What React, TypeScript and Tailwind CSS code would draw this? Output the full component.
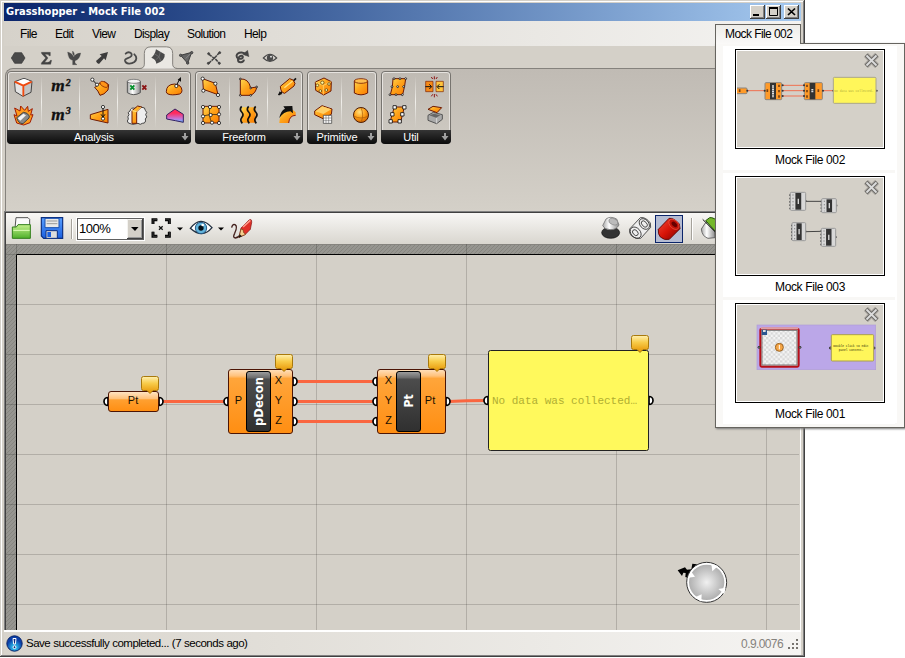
import React from "react";

type Kids = { children?: React.ReactNode };

const OR = { fill: "url(#orange)", stroke: "#6e1a04", strokeWidth: 3, strokeLinejoin: "round" as const };

function Defs() {
  return (
    <svg className="absolute h-0 w-0">
      <defs>
        <linearGradient id="orange" x1="0" y1="0" x2="1" y2="1">
          <stop offset="0" stopColor="#ffd850" />
          <stop offset=".45" stopColor="#ffa51c" />
          <stop offset="1" stopColor="#fa7c00" />
        </linearGradient>
        <linearGradient id="node" x1="0" y1="0" x2="0" y2="1">
          <stop offset="0" stopColor="#ffe0bd" />
          <stop offset=".1" stopColor="#ffc27c" />
          <stop offset=".14" stopColor="#ffa53a" />
          <stop offset="1" stopColor="#ff8e12" />
        </linearGradient>
        <linearGradient id="nodeSmall" x1="0" y1="0" x2="0" y2="1">
          <stop offset="0" stopColor="#ffe6c8" />
          <stop offset=".35" stopColor="#ffc27c" />
          <stop offset=".42" stopColor="#ffa030" />
          <stop offset="1" stopColor="#ff8e12" />
        </linearGradient>
        <linearGradient id="plate" x1="0" y1="0" x2="0" y2="1">
          <stop offset="0" stopColor="#a0a0a0" />
          <stop offset=".1" stopColor="#6e6e6e" />
          <stop offset=".13" stopColor="#4c4c4c" />
          <stop offset="1" stopColor="#303030" />
        </linearGradient>
        <linearGradient id="balloon" x1="0" y1="0" x2="0" y2="1">
          <stop offset="0" stopColor="#fff0b0" />
          <stop offset=".4" stopColor="#f8cc4a" />
          <stop offset="1" stopColor="#e69200" />
        </linearGradient>
        <linearGradient id="metal" x1="0" y1="0" x2="1" y2="0">
          <stop offset="0" stopColor="#a8a8a8" />
          <stop offset=".4" stopColor="#ffffff" />
          <stop offset="1" stopColor="#8c8c8c" />
        </linearGradient>
        <linearGradient id="hot" x1="0" y1="0" x2="0" y2="1">
          <stop offset=".3" stopColor="#ff2a5c" />
          <stop offset=".75" stopColor="#c07ae0" />
          <stop offset="1" stopColor="#4ec0ff" />
        </linearGradient>
        <radialGradient id="ball" cx=".4" cy=".3" r=".7">
          <stop offset="0" stopColor="#ffe080" />
          <stop offset=".5" stopColor="#ffa51e" />
          <stop offset="1" stopColor="#d86a00" />
        </radialGradient>
        <linearGradient id="green" x1="0" y1="0" x2="0" y2="1">
          <stop offset="0" stopColor="#c4f08c" />
          <stop offset="1" stopColor="#4fb02a" />
        </linearGradient>
        <linearGradient id="blue" x1="0" y1="0" x2="0" y2="1">
          <stop offset="0" stopColor="#5aa0ff" />
          <stop offset="1" stopColor="#1a5fe0" />
        </linearGradient>
        <linearGradient id="red" x1="0" y1="0" x2="1" y2="1">
          <stop offset="0" stopColor="#f04a3a" />
          <stop offset=".5" stopColor="#d81408" />
          <stop offset="1" stopColor="#7a0000" />
        </linearGradient>
        <radialGradient id="dial">
          <stop offset="0" stopColor="#f0f0f0" />
          <stop offset="1" stopColor="#b0b0b0" />
        </radialGradient>
        <radialGradient id="info" cy=".75">
          <stop offset="0" stopColor="#38e0ff" />
          <stop offset="1" stopColor="#0b3fa8" />
        </radialGradient>
        <pattern id="hatch" width="4" height="4" patternUnits="userSpaceOnUse">
          <rect width="4" height="4" fill="#969590" />
          <path d="M-1 1 L1 -1 M0 4 L4 0 M3 5 L5 3" stroke="#86857f" strokeWidth="1" />
        </pattern>
        <pattern id="checks" width="14" height="14" patternUnits="userSpaceOnUse">
          <rect width="14" height="14" fill="#f4f4f4" />
          <path d="M0 0h7v7h-7z M7 7h7v7h-7z" fill="#d8d8d8" />
        </pattern>
      </defs>
    </svg>
  );
}

function Dots({ at, r = 4.8 }: { at: number[][]; r?: number }) {
  return (
    <g fill="#fff" stroke="#111" strokeWidth="2.4">
      {at.map(([x, y]) => (
        <circle key={`${x}-${y}`} cx={x} cy={y} r={r} />
      ))}
    </g>
  );
}

/* ---------- title and menu ---------- */

function CaptionButton({ children, className = "" }: Kids & { className?: string }) {
  return (
    <div className={`h-[14px] w-[15px] bg-[#d4d0c8] shadow-[inset_-1px_-1px_#404040,inset_1px_1px_#fff,inset_-2px_-2px_#808080] ${className}`}>
      <svg className="block" width="15" height="14" viewBox="0 0 15 14" fill="none" stroke="#000">
        {children}
      </svg>
    </div>
  );
}

function TitleBar() {
  return (
    <div className="flex h-[18px] items-center bg-linear-to-r from-[#0a246a] to-[#a6caf0] pr-[2px] pl-[2px]">
      <span className="flex-1 font-['DejaVu_Sans_Condensed','DejaVu_Sans',sans-serif] text-[11px] leading-[18px] font-bold tracking-[0.01px] whitespace-nowrap text-white">
        Grasshopper - Mock File 002
      </span>
      <CaptionButton>
        <path d="M3 10h6" strokeWidth="2" />
      </CaptionButton>
      <CaptionButton className="ml-px">
        <path d="M3 3h9" strokeWidth="2" />
        <path d="M3.500 3v7.500h8v-8" />
      </CaptionButton>
      <CaptionButton className="ml-[3px]">
        <path d="M4 3.500l7 6.500M11 3.500l-7 6.500" strokeWidth="1.700" />
      </CaptionButton>
    </div>
  );
}

function MenuBar() {
  return (
    <div className="flex h-[25px] items-center bg-linear-to-r from-[#d6d2ca] to-[#f4f3f1] pt-[1px] pl-[16px] text-[12px] tracking-[-0.62px] text-black">
      <span className="w-[35px]">File</span>
      <span className="w-[37px]">Edit</span>
      <span className="w-[42px]">View</span>
      <span className="w-[53px]">Display</span>
      <span className="w-[57px]">Solution</span>
      <span>Help</span>
    </div>
  );
}

/* ---------- ribbon tabs ---------- */

const tabIcons: React.ReactNode[] = [
  <path key="0" d="M44 158h21l10 16-10 16H44l-10-16z" fill="#4a4a4a" stroke="#333" strokeWidth="2" />,
  <path key="1" d="M124 157h27v10h-4q-1-4-6-4h-6l9 11-10 13h9q7 0 8-6h4l-3 12h-28v-4l13-15-12-13z" fill="#444" stroke="#444" />,
  <path key="2" d="M218 194v-13q-13-2-15-25 13 3 18 15 7-12 21-12-3 20-17 23v7l6 5zM218 153q7 6 5 15-7-4-5-15" fill="#4a4a4a" stroke="#4a4a4a" />,
  <path key="3" d="M324 156l-7 25-5-6-15 17q-7-2-9-9l17-15-6-5z" fill="#3c3c3c" />,
  <path key="4" d="M377 161c8-8 22-3 17 7-5 8-20 5-19 14 2 12 20 10 28 4 8-7 8-16 0-23" fill="none" stroke="#4a4a4a" strokeWidth="5.500" strokeLinecap="round" />,
  <g key="5">
    <path d="M422 206q11-2 11-14v-32q0-20 20-20h46q19 0 19 20v32q0 12 12 14" fill="#eae8e3" />
    <path d="M420 205.500q13-1 13-13v-32q0-20 20-20h46q19 0 19 20v32q0 12 14 13" fill="none" stroke="#85827d" strokeWidth="3" />
    <path d="M468 148l26 15q3 19-25 28-1-13-15-18 11-8 14-25z" fill="#4a4a4a" />
    <path d="M481 156q-1 16-13 23M463 161q16 6 20 22" fill="none" stroke="#7a7a7a" strokeWidth="2" />
  </g>,
  <g key="6" fill="#666" stroke="#3f3f3f" strokeWidth="3">
    <path d="M542 166l33-9-12 33z" />
    <path d="M575 157l-18 19" stroke="#999" strokeWidth="2" />
    <circle cx="542" cy="166" r="3.500" /><circle cx="575" cy="158" r="3.500" /><circle cx="563" cy="189" r="3.500" />
  </g>,
  <g key="7" fill="none" stroke="#444" strokeWidth="3">
    <path d="M627 163l8 6 13 10 9 10M626 190l13-12 8-8 10-11" strokeWidth="4.500" strokeDasharray="10 2" />
    <g fill="#444"><circle cx="626" cy="161" r="3" /><circle cx="659" cy="158" r="3" /><circle cx="625" cy="190" r="3" /><circle cx="658" cy="190" r="3" /></g>
  </g>,
  <g key="8" fill="none" stroke="#444" strokeWidth="6">
    <path d="M738 165c-10-15-34-5-27 7 6 8 21 4 17-3-4-5-14 1-14 10 0 10 16 11 18 0" />
    <path d="M728 163l15-12 4 19z" fill="#444" strokeWidth="1" />
  </g>,
  <g key="9">
    <path d="M790 174q20-22 40 0-20 20-40 0z" fill="#ddd9d2" stroke="#4a4a4a" strokeWidth="3.500" />
    <circle cx="810" cy="174" r="9.500" fill="#4a4a4a" /><circle cx="813" cy="170" r="2.500" fill="#fff" />
  </g>,
];

function RibbonTabs() {
  return (
    <div className="relative z-10 flex h-[22px]">
      {tabIcons.map((icon, i) => (
        <svg key={i} className="overflow-visible" width="28" height="22" viewBox={`${12 + i * 84} 138 84 66`}>
          {icon}
        </svg>
      ))}
    </div>
  );
}

/* ---------- ribbon groups ---------- */

function Cell({ x, w, last = false, top, bottom }: { x: number; w: number; last?: boolean; top: React.ReactNode; bottom: React.ReactNode }) {
  return (
    <div className="flex shrink-0">
      <div className="flex flex-col">
        <svg className="block" width={w} height="28" viewBox={`${x * 3} 219 ${w * 3} 84`}>{top}</svg>
        <svg className="block" width={w} height="28" viewBox={`${x * 3} 303 ${w * 3} 84`}>{bottom}</svg>
      </div>
      {!last && <div className="-ml-px h-[52px] w-px self-center bg-linear-to-b from-transparent via-[#f0eeea] to-transparent" />}
    </div>
  );
}

function Group({ title, className, children }: Kids & { title: string; className: string }) {
  return (
    <div className={`flex h-[73px] shrink-0 flex-col overflow-hidden rounded-[4px] bg-linear-to-b from-[#bfbab3] to-[#cfcbc3] shadow-[inset_0_0_0_1px_#77746f,inset_0_0_0_2px_#e6e3df] ${className}`}>
      <div className="flex h-[59px] pt-[2px]">{children}</div>
      <div className="relative z-10 flex h-[14px] items-center bg-linear-to-b from-[#353535] to-[#0c0c0c] text-[11px] leading-[14px] tracking-[-0.15px] text-white">
        <span className="flex-1 pl-[2px] text-center">{title}</span>
        <svg width="12" height="12" viewBox="0 0 12 12"><path d="M5 2h2v3h2.500L6 9.500 2.500 5H5z" fill="#a0a0a0" /></svg>
      </div>
    </div>
  );
}

const Sup = ({ y, n }: { y: number; n: string }) => (
  <g fontFamily="Liberation Serif, serif" fontStyle="italic" fontWeight="bold" fill="#111" stroke="#111">
    <text x="154" y={y} fontSize="52">m</text>
    <text x="197" y={y - 17} fontSize="30">{n}</text>
  </g>
);

const Z = ({ children }: Kids) => <g transform="translate(570 132)">{children}</g>;

function Ribbon() {
  return (
    <div className="ml-px h-[143px] rounded-tl-[8px] border-t border-l border-[#85827d] bg-linear-to-b from-[#c0bbb4] to-[#d4d0c8]">
      <div className="flex gap-[4px] pt-[2px] pl-px">
        <Group title="Analysis" className="w-[184px]">
          <Cell x={7} w={35}
            top={<g strokeLinejoin="round"><path d="M44 245l28-10 24 9-3 33-24 12-23-14z" fill="#c4c4c4" stroke="#444" strokeWidth="3" /><path d="M46 247l23 10 26-12-23-9z" fill="#fff" /><path d="M46 248l23 10v29l-21-13z" fill="#e4e4e4" /><path d="M44 245l26 12 25-12M70 257v32" fill="none" stroke="#f04a10" strokeWidth="5.500" /></g>}
            bottom={<g><path d="M50 369l-8-25 9 4-7-24 16 9 2-15 12 13 9-12 2 15 12-8-5 19 7-1-9 24-19 7z" fill="#ff9a1c" stroke="#a01c05" strokeWidth="3" /><path d="M50 353l20-16q12 0 18 11l-1 6-18 17q-14 0-19-18z" fill="#8a8a8a" stroke="#333" strokeWidth="2.500" /><path d="M53 355l17-14 8 5-17 16z" fill="#f2f2f2" /></g>} />
          <Cell x={42} w={38} top={<Sup y={274} n="2" />} bottom={<Sup y={359} n="3" />} />
          <Cell x={80} w={38}
            top={<g><path d="M284 262q7-1 13-12l17-5 12 9-2 16q-12 15-24 16-5-14-16-24z" {...OR} /><ellipse cx="312" cy="253" rx="13" ry="7" fill="#ff9418" stroke="#7a2005" strokeWidth="2" transform="rotate(28 312 253)" /><path d="M277 239l14 15" stroke="#111" strokeWidth="3" /><Dots at={[[277, 239], [291, 254]]} /></g>}
            bottom={<g><path d="M271 344l53-16v41l-53-12z" {...OR} /><path d="M309 323v33M303 343l6 8 6-8" fill="none" stroke="#111" strokeWidth="3" /><Dots at={[[309, 321], [309, 356]]} /></g>} />
          <Cell x={118} w={38}
            top={<g><path d="M382 244v34q19 12 39 0v-34z" fill="url(#metal)" stroke="#555" strokeWidth="3" /><ellipse cx="401.500" cy="244" rx="19.500" ry="6" fill="#f4f4f4" stroke="#555" strokeWidth="2" /><path d="M391 256l12 13M403 256l-12 13" stroke="#08912f" strokeWidth="5.500" /><path d="M427 256l12 13M439 256l-12 13" stroke="#8c1515" strokeWidth="5.500" /></g>}
            bottom={<g><path d="M385 369q-6-6 0-12-4-7 2-13-7-7 3-11 2-12 15-8l20-3q11-1 11 9 8 6 1 13 7 7-1 13 3 13-9 13-6 6-13 0-17 7-29-1z" fill="#eee" stroke="#444" strokeWidth="3" /><path d="M396 332l17-14 12 3-15 14v35h-14z" {...OR} /><path d="M396 332l14 3 13-13" fill="none" stroke="#ffe080" strokeWidth="3" /></g>} />
          <Cell x={156} w={35} last
            top={<g><path d="M499 275q0-22 25-23 21 2 22 20 0 7-7 10-24 5-35 0-5-2-5-7z" {...OR} /><path d="M529 257l10-20" stroke="#111" strokeWidth="3" /><path d="M533 239l10-8v14z" fill="#111" /><Dots at={[[529, 258]]} /></g>}
            bottom={<path d="M500 345l25-18 25 16v24l-24-5-26-5z" fill="url(#hot)" stroke="#352060" strokeWidth="3" />} />
        </Group>
        <Group title="Freeform" className="w-[108px]">
          <Cell x={195} w={35}
            top={<Z><path d="M38 104l38 14 8 34-44-16z" {...OR} /><Dots at={[[38, 104], [76, 119], [84, 153], [40, 140]]} /></Z>}
            bottom={<Z><path d="M39 187h48v50H39z" {...OR} /><path d="M60 188q-6 28 6 49M39 216q24-8 48-4" fill="none" stroke="#111" strokeWidth="2" /><Dots at={[[39, 189], [60, 189], [87, 189], [39, 217], [62, 213], [87, 211], [39, 237], [66, 236], [87, 237]]} /></Z>} />
          <Cell x={230} w={38}
            top={<Z><path d="M151 105q25-2 31 27l18-3q-2 18-18 25h-31z" {...OR} /><Dots r={2.6} at={[[151, 105], [200, 129], [182, 154], [151, 154], [182, 132]]} /></Z>}
            bottom={<Z><path d="M155 190h42v46h-42z" fill="url(#orange)" /><path d="M155 187q-8 9 0 17 8 8 0 17-6 8 2 17M176 187q-8 9 0 17 8 8 0 17-6 8 2 17M197 187q-8 9 0 17 8 8 0 17-6 8 2 17" fill="none" stroke="#111" strokeWidth="5" /></Z>} />
          <Cell x={268} w={35} last
            top={<Z><path d="M266 153l52-50" stroke="#111" strokeWidth="5" /><path d="M271 127l28-23q12 1 16 14l-3 8-28 22q-12-2-13-21z" {...OR} /><path d="M283 131l25-20" stroke="#ffe080" strokeWidth="4" /><path d="M264 154l5-12 8 8z" fill="#111" /></Z>}
            bottom={<Z><path d="M268 237q2-38 28-40 14-2 21 8v9q-18 0-21 23z" fill="url(#orange)" /><path d="M317 214q-19 0-21 23" fill="none" stroke="#8c1c10" strokeWidth="3" /><path d="M268 222q4-22 17-28l-5-7 27-1 2 22-8-6q-20 1-33 20z" fill="#111" /></Z>} />
        </Group>
        <Group title="Primitive" className="w-[70px]">
          <Cell x={307} w={35}
            top={<Z><path d="M376 114l26-12 22 11-1 28-22 12-24-14z" {...OR} /><path d="M376 114l24 10 24-11M400 124v28" stroke="#ffe080" strokeWidth="2" fill="none" /><g fill="#fff8a0" stroke="#503000" strokeWidth="2"><circle cx="397" cy="116" r="5" /><circle cx="382" cy="124" r="4" /><circle cx="391" cy="141" r="4" /><circle cx="409" cy="138" r="4" /><circle cx="417" cy="120" r="4" /></g></Z>}
            bottom={<Z><path d="M374 201l22-16 30 10-2 16-25 13-25-12z" {...OR} /><path d="M377 202l23 8 24-14-27-9z" fill="#ffd068" /><path d="M400 214h25v24h-25z" fill="#fff" stroke="#333" strokeWidth="2" /><path d="M400 222h25M400 230h25M408 214v24M416 214v24" stroke="#555" strokeWidth="1.500" /></Z>} />
          <Cell x={342} w={35} last
            top={<Z><path d="M493 111v36q20 11 40 0v-36z" {...OR} /><ellipse cx="513" cy="111" rx="20" ry="7" fill="#ffbe50" stroke="#7a2005" strokeWidth="2.500" /></Z>}
            bottom={<Z><circle cx="513" cy="213" r="22.500" fill="url(#ball)" stroke="#4a1a05" strokeWidth="3" /><path d="M491 216q22 12 44 0M513 191q10 22 0 44" fill="none" stroke="#a85a08" strokeWidth="2" /></Z>} />
        </Group>
        <Group title="Util" className="w-[70px]">
          <Cell x={381} w={35}
            top={<Z><path d="M609 104h38q-2 22-9 48h-37q8-22 8-48z" {...OR} /><Dots r={2.8} at={[[612, 104], [630, 104], [647, 104], [606, 128], [623, 128], [641, 128], [600, 152], [618, 152], [637, 152]]} /></Z>}
            bottom={<Z><path d="M613 189h30l-11 45h-32z" {...OR} /><g fill="#fff" stroke="#111" strokeWidth="2.500"><path d="M609 185h10v10h-10zM638 185h10v10h-10zM602 206h10v10h-10zM632 206h10v10h-10zM597 227h10v10h-10zM624 227h10v10h-10z" /></g></Z>} />
          <Cell x={416} w={35} last
            top={<Z><path d="M707 112h22v31h-22z" fill="#f58a18" stroke="#7a2005" strokeWidth="2" /><path d="M738 112h22v31h-22z" fill="#ffc43c" stroke="#7a2005" strokeWidth="2" /><path d="M706 128h18M743 128h18M718 121l7 7-7 7M748 121l-7 7 7 7" fill="none" stroke="#111" strokeWidth="3" /><path d="M733 97v9M724 99l4 6M742 99l-4 6M733 150v10M724 157l4-6M742 157l-4-6" stroke="#8c1515" strokeWidth="3" /></Z>}
            bottom={<Z><path d="M714 214l16-9 27 7v14l-17 13-26-10z" fill="#aaa" stroke="#555" strokeWidth="3" /><path d="M718 214l14-5 19 5-13 7z" fill="#666" /><path d="M740 222v16" stroke="#eee" strokeWidth="2" /><path d="M714 196l15-9 26 4-14 15z" {...OR} /></Z>} />
        </Group>
      </div>
    </div>
  );
}

/* ---------- canvas toolbar ---------- */

function DropArrow() {
  return <svg width="6" height="31" viewBox="0 0 6 31"><path d="M0 14.500h6L3 17.500z" fill="#000" /></svg>;
}

function Toolbar() {
  return (
    <div className="flex h-[31px] items-center bg-linear-to-b from-[#f8f7f5] to-[#d9d6cf]">
      <svg className="ml-[3px]" width="26" height="31" viewBox="27 24 78 93">
        <path d="M45 70l3-32h36l5 5v30z" fill="#fafafa" stroke="#555" strokeWidth="3" />
        <path d="M37 66h12l5-7h37v41H37z" fill="url(#green)" stroke="#2f7d18" strokeWidth="3" />
        <path d="M40 76h49" stroke="#e0ffb8" strokeWidth="3" />
      </svg>
      <svg className="ml-[3px]" width="28" height="31" viewBox="114 24 84 93">
        <path d="M124 38h64v62h-57l-7-7z" fill="url(#blue)" stroke="#0c2f80" strokeWidth="3.500" />
        <path d="M135 40h42v28h-42z" fill="#e8e8e8" stroke="#1850b0" strokeWidth="3" />
        <path d="M140 48h32M140 56h32" stroke="#999" strokeWidth="3" />
        <path d="M138 77h34v23h-34z" fill="#ddd" stroke="#0c2f80" strokeWidth="3" />
        <path d="M142 81h11v15h-11z" fill="#1a5fe0" />
      </svg>
      <div className="ml-[5px] h-[20px] w-px bg-[#a5a29b] shadow-[1px_0_#fff]" />
      <div className="ml-[4px] flex h-[24px] w-[69px] border border-[#fff] bg-white shadow-[inset_0_0_0_1px_#606060]">
        <span className="flex-1 pl-[2px] font-['Liberation_Sans',Arial,sans-serif] text-[13px] leading-[22px] tracking-[-0.5px] text-black">100%</span>
        <div className="m-px flex w-[16px] items-center justify-center bg-[#d4d0c8] shadow-[inset_-1px_-1px_#404040,inset_1px_1px_#f4f3f0,inset_-2px_-2px_#999]">
          <svg width="8" height="4" viewBox="0 0 8 4"><path d="M0 0h7.500L4 4z" fill="#000" /></svg>
        </div>
      </div>
      <svg className="ml-[5px]" width="22" height="31" viewBox="450 24 66 93">
        <path d="M472 44h-13v13M495 44h13v13M459 80v14h13M508 80v14h-13" fill="none" stroke="#000" strokeWidth="9" />
        <path d="M472 44h-13v13M495 44h13v13M459 80v14h13M508 80v14h-13" fill="none" stroke="#333" strokeWidth="3" />
        <path d="M477 64l11 10M488 64l-11 10" stroke="#111" strokeWidth="4" />
      </svg>
      <span className="ml-[5px] flex"><DropArrow /></span>
      <svg className="ml-[6px]" width="24" height="31" viewBox="567 24 72 93">
        <path d="M571 70q31-41 65-2-29 35-65 2z" fill="#fff" stroke="#223040" strokeWidth="4" />
        <circle cx="603" cy="69" r="17" fill="#62b4dc" stroke="#265a86" strokeWidth="3" />
        <circle cx="603" cy="69" r="8" fill="#051018" /><circle cx="608" cy="60" r="4" fill="#fff" />
      </svg>
      <span className="ml-[5px] flex"><DropArrow /></span>
      <svg className="ml-[6px]" width="24" height="31" viewBox="690 24 72 93">
        <path d="M695 68q2-12 10-9 9 5-1 26-7 13 2 14 9-1 15-10" fill="none" stroke="#43201c" strokeWidth="4" />
        <path d="M717 97l6-28 24-24q9-5 8 8l-4 20-16 16z" fill="#e03028" stroke="#801010" strokeWidth="2" />
        <path d="M729 66l22-20" stroke="#ff9a88" strokeWidth="5" />
        <path d="M717 97l6-25 6 2 2 9 6 5z" fill="#f5cf90" stroke="#704010" strokeWidth="2" /><path d="M716 98l3-10 7 6z" fill="#111" />
      </svg>
      <div className="flex-1" />
      <svg width="24" height="31" viewBox="27 24 72 93">
        <ellipse cx="62" cy="83" rx="27" ry="17" fill="#333" stroke="#111" strokeWidth="2" />
        <path d="M38 62l10-20q13-10 32 0l7 18q-8 15-27 14-17-1-22-12z" fill="url(#metal)" stroke="#777" strokeWidth="2.500" />
        <ellipse cx="70" cy="50" rx="14" ry="9" fill="#bbb" stroke="#888" strokeWidth="2" transform="rotate(20 70 50)" />
      </svg>
      <svg className="ml-[4px]" width="26" height="31" viewBox="111 24 78 93" fill="none" stroke="#333" strokeWidth="2.500">
        <path d="M119 72l32-34q16-3 30 16l1 13-30 33q-14 3-27-7-9-9-6-21z" fill="#eee" />
        <ellipse cx="163" cy="57" rx="18" ry="13" transform="rotate(48 163 57)" /><ellipse cx="163" cy="57" rx="11" ry="7" transform="rotate(48 163 57)" />
        <ellipse cx="137" cy="83" rx="19" ry="14" transform="rotate(48 137 83)" /><ellipse cx="136" cy="83" rx="10" ry="7" transform="rotate(48 136 83)" />
      </svg>
      <div className="ml-[2px] flex h-[28px] w-[28px] items-center justify-center border border-[#0a246a] bg-[#b5bcd2]">
        <svg width="26" height="26" viewBox="198 30 78 78">
          <path d="M205 70l32-33q15-2 31 17l2 14-32 32q-15 4-27-7-8-9-6-23z" fill="url(#red)" stroke="#500" strokeWidth="2.500" />
          <ellipse cx="252" cy="55" rx="18" ry="12" transform="rotate(45 252 55)" fill="#c01208" stroke="#ee5b48" strokeWidth="2" />
          <ellipse cx="253" cy="55" rx="10" ry="6" transform="rotate(45 253 55)" fill="#600" />
        </svg>
      </div>
      <div className="ml-[8px] h-[22px] w-px bg-[#a5a29b] shadow-[1px_0_#fff]" />
      <svg className="mr-[76px] ml-[7px]" width="26" height="31" viewBox="330 24 78 93">
        <path d="M337 72l12-18 25-5 4 49-21 2q-18-6-20-28z" fill="url(#metal)" stroke="#555" strokeWidth="2.500" />
        <path d="M350 47l12-9q12-2 30 15v35l-12-8z" fill="#74b82a" stroke="#23520a" strokeWidth="3" /><path d="M341 43l37 37" stroke="#111" strokeWidth="3" />
      </svg>
    </div>
  );
}

/* ---------- node canvas ---------- */

function Port({ x, y, side }: { x: number; y: number; side: "l" | "r" }) {
  return <path d={side === "l" ? `M${x} ${y - 4}a4 4 0 0 0 0 8z` : `M${x} ${y - 4}a4 4 0 0 1 0 8z`} fill="#fff" stroke="#000" strokeWidth="1.700" />;
}

function Balloon({ x, y }: { x: number; y: number }) {
  return <path d={`M${x + 2} ${y}h13q2 0 2 2v10q0 2-2 2h-3.500l-3 3-3-3h-3.500q-2 0-2-2v-10q0-2 2-2z`} fill="url(#balloon)" stroke="#a8790c" />;
}

const label = { fontFamily: "Liberation Sans, Arial, sans-serif", fontSize: 11, textAnchor: "middle" as const, fill: "#1a1000" };
const plateLabel = { fontFamily: "DejaVu Sans Condensed, DejaVu Sans, sans-serif", fontWeight: 700, fill: "#fff", textAnchor: "middle" as const };

function Canvas() {
  return (
    <div className="h-[386px]">
      <svg className="block" width="795" height="386" viewBox="6 244 795 386">
        <rect x="6" y="244" width="795" height="386" fill="#d4d0c8" />
        <path d="M6 244h794v10H16v376H6z" fill="url(#hatch)" />
        <path d="M6 244.500h794" stroke="#86847f" />
        <g stroke="#000" strokeOpacity=".16" shapeRendering="crispEdges">
          <path d="M166.500 244v386M316.500 244v386M466.500 244v386M616.500 244v386M766.500 244v386M16.500 244v10M6 254.500h10" />
          <path d="M6 304.500h793M6 354.500h793M6 404.500h793M6 454.500h793M6 504.500h793M6 554.500h793M6 604.500h793" />
        </g>
        <path d="M16.500 630V254.500H800" fill="none" stroke="#000" />
        <path d="M800.500 244v386" stroke="#fff" />

        <g stroke="#fa6640" strokeWidth="3" fill="none">
          <path d="M163 401.500h61M297 381.500h76M297 401.500h76M297 421.500h76M449 401.500q18-1 35-1" />
        </g>
        <Port x={108} y={401.500} side="l" /><Port x={159} y={401.500} side="r" />
        <Port x={228} y={401.500} side="l" />
        {[381.5, 401.5, 421.5].map((y) => (
          <g key={y}><Port x={293} y={y} side="r" /><Port x={377} y={y} side="l" /></g>
        ))}
        <Port x={446} y={401.500} side="r" /><Port x={488} y={400.500} side="l" /><Port x={649} y={400.500} side="r" />

        <g stroke="#4c1505">
          <rect x="108.500" y="391.500" width="50" height="20" rx="2.500" fill="url(#nodeSmall)" />
          <rect x="228.500" y="369.500" width="64" height="64" rx="2.500" fill="url(#node)" />
          <rect x="377.500" y="369.500" width="68" height="64" rx="2.500" fill="url(#node)" />
        </g>
        <g stroke="#000" fill="url(#plate)">
          <rect x="246.500" y="371.500" width="24" height="60" rx="2.500" />
          <rect x="396.500" y="371.500" width="24" height="60" rx="2.500" />
        </g>
        <rect x="488.500" y="350.500" width="160" height="100" rx="2" fill="#fff95c" stroke="#222" />

        <g {...label}>
          <text x="133" y="404">Pt</text>
          <text x="238.500" y="404">P</text>
          <text x="278.500" y="384">X</text><text x="278.500" y="404">Y</text><text x="278.500" y="424">Z</text>
          <text x="388.500" y="384">X</text><text x="388.500" y="404">Y</text><text x="388.500" y="424">Z</text>
          <text x="430" y="404">Pt</text>
        </g>
        <text {...plateLabel} fontSize="12.500" transform="translate(263 401.500) rotate(-90)" textLength="49" lengthAdjust="spacingAndGlyphs">pDecon</text>
        <text {...plateLabel} fontSize="12" transform="translate(413 401) rotate(-90)">Pt</text>
        <text x="492" y="404" fontFamily="Liberation Mono, monospace" fontSize="11" fill="#b0ae32" textLength="145">No data was collected…</text>

        <Balloon x={141.500} y={376.500} /><Balloon x={275.500} y={354.500} /><Balloon x={428.500} y={354.500} /><Balloon x={631.500} y={335.500} />

        <g transform="translate(660 545) scale(.33333)">
          <path d="M53 76l22-9 6 7 13-1 3-17 13 2 4 12-26 30-12-4 1-12-7-1-4 10z" fill="#000" />
          <circle cx="140" cy="112" r="60" fill="#fff" stroke="#333" strokeWidth="3" />
          <circle cx="140" cy="112" r="53" fill="url(#dial)" />
          <path d="M154 58l20 5-17 16zM86 98l8-18 11 15zM175 132l22-4-4 19zM105 157l20-9-1 22z" fill="#fff" />
        </g>
      </svg>
    </div>
  );
}

function StatusBar() {
  return (
    <div className="flex h-[25px] items-center border-t-2 border-white bg-linear-to-r from-[#d8d4cc] to-[#f5f4f2] pr-[1px] pl-[2px] text-[12px]">
      <svg width="17" height="17" viewBox="0 0 17 17">
        <circle cx="8.500" cy="8.500" r="7.700" fill="url(#info)" stroke="#0a2468" />
        <path d="M7 3.500h3l-.6 5.500h-1.800z" fill="#0b2a80" stroke="#fff" /><circle cx="8.500" cy="12.200" r="1.400" fill="#0b2a80" stroke="#fff" />
      </svg>
      <span className="ml-[3px] flex-1 text-[11.5px] tracking-[-0.5px] text-black [word-spacing:0.3px]">Save successfully completed... (7 seconds ago)</span>
      <span className="tracking-[-0.6px] text-[#85827d]">0.9.0076</span>
      <svg className="mt-[3px] ml-[5px]" width="12" height="12" viewBox="0 0 12 12" fill="#77746f">
        <path d="M8 0h2v2h-2zM4 4h2v2h-2zM8 4h2v2h-2zM0 8h2v2h-2zM4 8h2v2h-2zM8 8h2v2h-2z" />
      </svg>
    </div>
  );
}

/* ---------- document switcher ---------- */

function CloseMark() {
  return (
    <svg className="absolute top-[3px] right-[5px]" width="15" height="15" viewBox="0 0 15 15">
      <path d="M2 2l11 11M13 2l-11 11" stroke="#77746f" strokeOpacity=".35" strokeWidth="6" />
      <path d="M2 2l11 11M13 2l-11 11" stroke="#6e6c68" strokeWidth="4" />
      <path d="M2.500 2.500l10 10M12.500 2.500l-10 10" stroke="#dcdcdc" strokeWidth="1.800" />
    </svg>
  );
}

function DocItem({ name, box, children }: Kids & { name: string; box: string }) {
  return (
    <div className="h-[127px] w-[172px] border-b-[3px] border-[#f8f7f5] bg-white pt-[3px]">
      <div className="relative ml-[12px] h-[100px] w-[150px] border border-black bg-[#d4d0c8] shadow-[inset_0_0_0_1px_#fff]">
        <svg className="m-px block" width="146" height="96" viewBox={box}>{children}</svg>
        <CloseMark />
      </div>
      <div className="ml-[12px] w-[150px] pt-[4px] text-center text-[12px] leading-[14px] tracking-[-0.37px] text-black">{name}</div>
    </div>
  );
}

function GreyNode({ x, y, w, h }: { x: number; y: number; w: number; h: number }) {
  return (
    <g>
      <path d={`M${x} ${y + 6}v${h - 8}M${x + w} ${y + h / 2 - 3}v6`} stroke="#444" strokeWidth="6" strokeDasharray="5 5" />
      <rect x={x} y={y} width={w} height={h} rx="3" fill="#d8d8d8" stroke="#999" strokeWidth="3" />
      <rect x={x + w * 0.33} y={y + 2} width={w * 0.38} height={h - 4} fill="#333" />
      <path d={`M${x + w * 0.52} ${y + h / 2 - 8}v16`} stroke="#ddd" strokeWidth="4" />
      <path d={`M${x + 8} ${y + 6}v${h - 10}`} stroke="#888" strokeWidth="3" strokeDasharray="4 6" />
    </g>
  );
}

function DocSwitcher() {
  return (
    <div className="absolute top-[24px] left-[715px] w-[190px]">
      <div className="relative z-10 h-[20px] w-[86px] border border-b-0 border-[#66645f] bg-linear-to-b from-[#eeede9] to-[#faf9f8] pl-[9px] text-[12px] leading-[19px] tracking-[-0.57px] whitespace-nowrap text-black">
        Mock File 002
      </div>
      <div className="-mt-px h-[385px] border border-[#66645f] bg-white pl-[7px] pt-[2px] shadow-[inset_7px_0_#f9f8f6,inset_-7px_0_#f9f8f6,inset_0_2px_#f9f8f6,inset_0_-4px_#f9f8f6,1px_1px_2px_#777]">
        <DocItem name="Mock File 002" box="141 153 438 288">
          <path d="M168 272h58M278 256h66M278 272h66M278 288h66M398 272h33" stroke="#f07050" strokeWidth="3" />
          <g fill="#ff9a28" stroke="#8a8580" strokeWidth="3">
            <rect x="130" y="264" width="41" height="17" rx="3" /><rect x="225" y="248" width="50" height="51" rx="3" /><rect x="343" y="248" width="54" height="51" rx="3" />
          </g>
          <rect x="240" y="249" width="18" height="49" fill="#333" /><rect x="359" y="249" width="17" height="49" fill="#333" />
          <path d="M249 256v36M367 267v11" stroke="#ddd" strokeWidth="6" strokeDasharray="4 1.500" />
          <g fill="#333">
            <circle cx="224" cy="272" r="3" /><circle cx="278" cy="256" r="3" /><circle cx="278" cy="272" r="3" /><circle cx="278" cy="288" r="3" />
            <circle cx="342" cy="256" r="3" /><circle cx="342" cy="272" r="3" /><circle cx="342" cy="288" r="3" />
            <circle cx="399" cy="272" r="3" /><circle cx="430" cy="272" r="3" /><circle cx="560" cy="272" r="3" /><circle cx="172" cy="272" r="3" />
          </g>
          <path d="M232 268v8M267 254v7M267 270v7M267 286v7M351 254v7M351 270v7M351 286v7M385 268v8M149 268v8" stroke="#7a4010" strokeWidth="5" />
          <rect x="430" y="232" width="128" height="78" rx="3" fill="#fff65a" stroke="#aaa68a" strokeWidth="3" />
          <text x="433" y="275" fontFamily="Liberation Mono, monospace" fontSize="9" textLength="117" fill="#b4b03c">No data was collected…</text>
        </DocItem>
        <DocItem name="Mock File 003" box="81 39 438 288">
          <path d="M288 109h45M289 200l43-1" stroke="#444" strokeWidth="3" />
          <GreyNode x={241} y={82} w={46} h={54} /><GreyNode x={335} y={101} w={44} h={42} />
          <GreyNode x={246} y={173} w={41} h={54} /><GreyNode x={334} y={190} w={43} h={54} />
        </DocItem>
        <DocItem name="Mock File 001" box="81 30 438 288">
          <rect x="141" y="90" width="356" height="134" fill="#bba7e8" stroke="#b09cd8" strokeWidth="2" />
          <rect x="151" y="101" width="115" height="114" rx="4" fill="#e8b0b0" stroke="#b81018" strokeWidth="6" />
          <path d="M152 100h113" stroke="#e0a0a4" strokeWidth="6" />
          <rect x="156" y="106" width="105" height="104" fill="url(#checks)" stroke="#777" strokeWidth="3" />
          <rect x="155" y="104" width="16" height="16" fill="#2a5590" /><path d="M159 105h8v6h-8z" fill="#ddd" />
          <circle cx="208" cy="157" r="12" fill="#f5a545" stroke="#9a6426" strokeWidth="3" /><path d="M208 150v13" stroke="#fff" strokeWidth="3" />
          <g fill="#999" stroke="#333" strokeWidth="3"><circle cx="147" cy="157" r="3" /><circle cx="270" cy="157" r="3" /><circle cx="361" cy="159" r="3" /><circle cx="492" cy="159" r="3" /></g>
          <rect x="364" y="119" width="127" height="79" rx="3" fill="#fff65a" stroke="#aaa050" strokeWidth="3" />
          <g fontFamily="Liberation Mono, monospace" fontSize="9" fill="#33310c">
            <text x="370" y="157" textLength="106">Double click to edit</text><text x="386" y="167" textLength="74">panel content…</text>
          </g>
        </DocItem>
      </div>
    </div>
  );
}

export default function App() {
  return (
    <div className="relative h-[658px] w-[905px] overflow-hidden bg-white font-['Liberation_Sans',Arial,sans-serif]">
      <Defs />
      <div className="h-[657px] w-[805px] bg-[#d4d0c8] pt-[3px] pr-[4px] pl-[4px] shadow-[inset_-1px_-1px_#404040,inset_1px_1px_#d4d0c8,inset_-2px_-2px_#808080,inset_2px_2px_#fff]">
        <TitleBar />
        <MenuBar />
        <RibbonTabs />
        <Ribbon />
        <div className="border-t border-l border-[#808080]">
          <div className="border-t border-l border-[#404040]">
            <Toolbar />
            <Canvas />
          </div>
        </div>
        <StatusBar />
      </div>
      <DocSwitcher />
    </div>
  );
}
